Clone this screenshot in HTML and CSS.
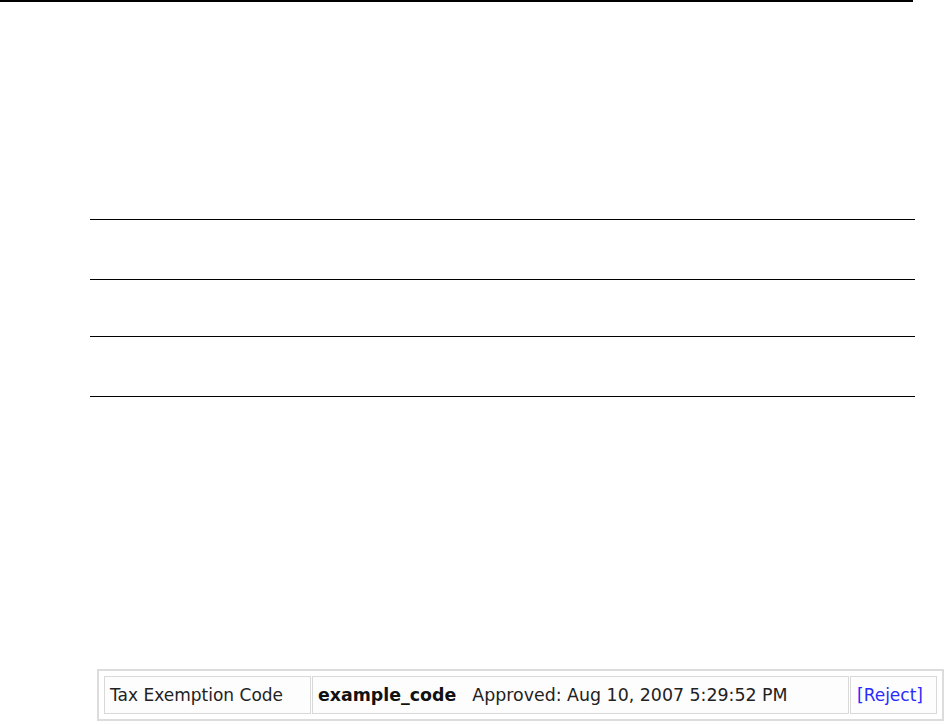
FILE: index.html
```html
<!DOCTYPE html>
<html>
<head>
<meta charset="utf-8">
<link rel="stylesheet" href="styles.css">
</head>
<body>
<div class="topbar"></div>
<div class="list">
  <div class="row r1"></div>
  <div class="row r2"></div>
  <div class="row r3"></div>
</div>
<div class="box">
  <table class="codes">
    <tr>
      <td class="label">Tax Exemption Code</td>
      <td class="value"><b>example_code</b><span class="status">Approved: Aug 10, 2007 5:29:52 PM</span></td>
      <td class="action"><a href="#">[Reject]</a></td>
    </tr>
  </table>
</div>
</body>
</html>
```

FILE: styles.css
```css
html, body {
  margin: 0;
  padding: 0;
  background: #fff;
}
body {
  font-family: "DejaVu Sans", Verdana, sans-serif;
}
.topbar {
  width: 913px;
  border-top: 2px solid #000;
}
.list {
  margin: 217px 0 0 90px;
  width: 825px;
  border-bottom: 1px solid #000;
}
.row {
  border-top: 1px solid #000;
}
.r1 { height: 59px; }
.r2 { height: 56px; }
.r3 { height: 59px; }

.box {
  margin: 272px 0 0 97px;
  width: 835px;
  border: 2px solid #dcdcdc;
  padding: 4px;
}
.codes {
  border-collapse: separate;
  border-spacing: 1px;
  width: 100%;
  font-size: 17px;
  color: #222;
}
.codes td {
  border: 1px solid #d9d9d9;
  background: #fdfdfd;
  height: 36px;
  padding: 0 5px;
  vertical-align: middle;
  white-space: nowrap;
}
.codes td.label {
  width: 195px;
}
.codes td.value {
  width: 525px;
}
.codes td.value b {
  color: #111;
  font-size: 17.4px;
}
.status {
  margin-left: 16px;
  font-size: 17.4px;
}
.codes td.action {
  padding-left: 6px;
}
.action a {
  color: #2a2aff;
  text-decoration: none;
}
```
